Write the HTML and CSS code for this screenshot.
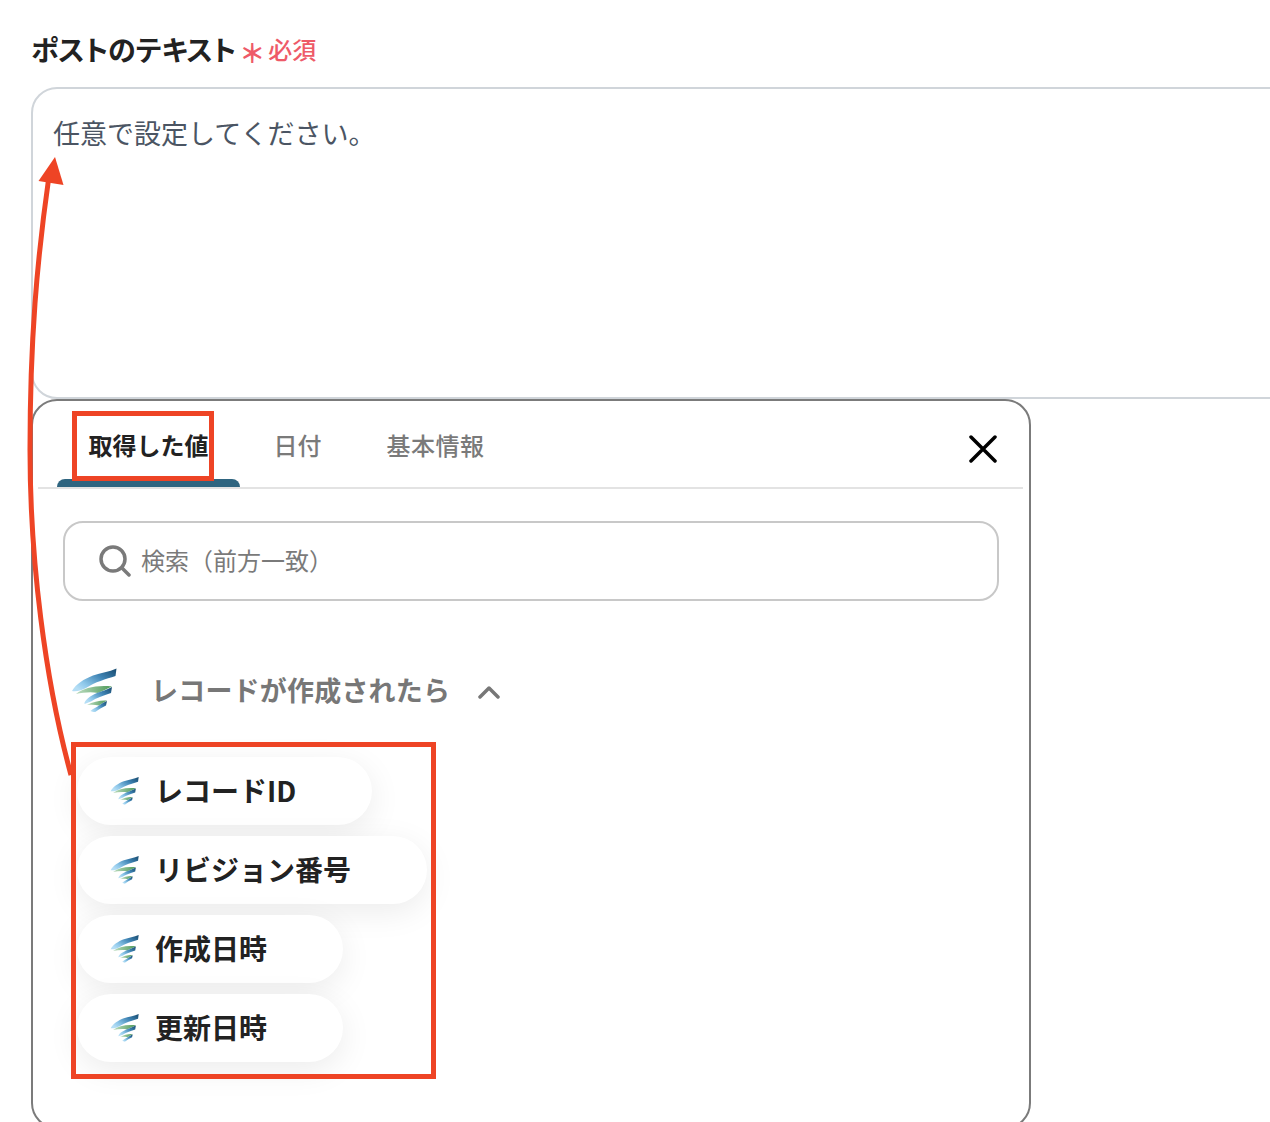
FILE: index.html
```html
<!DOCTYPE html>
<html lang="ja">
<head>
<meta charset="utf-8">
<title>ポストのテキスト</title>
<link rel="stylesheet" href="styles.css">
</head>
<body>
<svg class="defs" width="0" height="0" aria-hidden="true">
  <defs>
    <linearGradient id="gBlue" x1="1" y1="0" x2="0" y2="0.7">
      <stop offset="0" stop-color="#174a6e"/><stop offset=".4" stop-color="#3f84b4"/><stop offset=".8" stop-color="#8fc8ea"/><stop offset="1" stop-color="#b5def5"/>
    </linearGradient>
    <linearGradient id="gGreen" x1="0" y1="0" x2="1" y2="0">
      <stop offset="0" stop-color="#bcdcc0"/><stop offset="1" stop-color="#4f9a5a"/>
    </linearGradient>
    <symbol id="logo" viewBox="0 0 46 44">
      <path fill="url(#gBlue)" d="M45.500 .5 44.500 8C35 11 24 14 15 20 11 22 6 24 1 23 5 16 13 11 22 7.500 30 4.500 38 4 45.500 .5Z"/>
      <path fill="url(#gGreen)" d="M5 26C13 20 25 17 41 18.500 36 21 31 23 27 25 20 23.500 12 24.500 5 26Z"/>
      <path fill="url(#gBlue)" d="M41 19 40 25C32 28 25 30 20 33.500L13.500 36C13 32 20 27.500 26 25 32 23 36 21.500 41 19Z"/>
      <path fill="url(#gGreen)" d="M16 37C22 33.500 30 32 36 32.500 33 34 30.500 36 28 37.500 24 36.500 20 36.500 16 37Z"/>
      <path fill="url(#gBlue)" d="M36 33 35 37.500C31 39.500 27 42 23.500 44.500L19.500 43C22 40.500 26 39 28 37.500 30.500 36 33 34 36 33Z"/>
    </symbol>
  </defs>
</svg>
<main class="page">
  <div class="field-label">
    <span class="field-name">ポストのテキスト</span>
    <span class="field-required"><span class="req-mark">＊</span>必須</span>
  </div>
  <div class="textarea">任意で設定してください。</div>
  <section class="panel">
    <div class="tabs">
      <div class="tab tab-active">取得した値<span class="tab-bar"></span></div>
      <div class="tab">日付</div>
      <div class="tab tab-wide">基本情報</div>
      <svg class="close" viewBox="0 0 28 28" aria-label="閉じる">
        <path d="M2 2 26 26M26 2 2 26"/>
      </svg>
    </div>
    <div class="search">
      <svg class="search-icon" viewBox="0 0 32 32" aria-hidden="true">
        <circle cx="14" cy="14" r="12"/>
        <path d="M23 23 30 30"/>
      </svg>
      <span>検索（前方一致）</span>
    </div>
    <div class="group-head">
      <svg class="group-logo" aria-hidden="true"><use href="#logo"/></svg>
      <span class="group-title">レコードが作成されたら</span>
      <svg class="chevron" viewBox="0 0 22 14" aria-hidden="true"><path d="M2 12 11 3 20 12"/></svg>
    </div>
    <ul class="pills">
      <li class="pill"><svg class="pill-logo" aria-hidden="true"><use href="#logo"/></svg>レコードID</li>
      <li class="pill"><svg class="pill-logo" aria-hidden="true"><use href="#logo"/></svg>リビジョン番号</li>
      <li class="pill"><svg class="pill-logo" aria-hidden="true"><use href="#logo"/></svg>作成日時</li>
      <li class="pill"><svg class="pill-logo" aria-hidden="true"><use href="#logo"/></svg>更新日時</li>
    </ul>
  </section>
  <div class="mark mark-tab"></div>
  <div class="mark mark-list"></div>
  <svg class="arrow" viewBox="0 0 1270 1122" aria-hidden="true">
    <path class="arrow-line" d="M71 775C45 680 30 560 30 450 30 340 37 260 49 176"/>
    <path class="arrow-head" d="M55 157 38.500 181 63.500 185Z"/>
  </svg>
</main>
</body>
</html>
```
FILE: styles.css
```css
* { box-sizing: border-box; }
html, body { margin: 0; padding: 0; background: #fff; }
body {
  width: 1270px;
  height: 1122px;
  overflow: hidden;
  font-family: "Noto Sans CJK JP", "Noto Sans", sans-serif;
  color: #222;
}
.defs { position: absolute; }
.page { position: relative; height: 1122px; padding: 29px 0 0 31px; overflow: hidden; }

.field-label { display: flex; align-items: center; height: 40px; margin-bottom: 18px; }
.field-name { font-size: 28px; font-weight: 700; color: #222; line-height: 40px; font-feature-settings: "palt"; }
.field-required { display: flex; align-items: center; margin-left: 3px; font-size: 24px; font-weight: 500; color: #ee5a68; line-height: 40px; }
.req-mark { width: 29px; font-size: 26px; font-weight: 700; margin-top: 5px; }

.textarea {
  width: 1290px;
  height: 312px;
  padding: 24px 20px;
  border: 2px solid #d0d5da;
  border-radius: 26px;
  font-size: 27px;
  line-height: 40px;
  color: #4b5563;
}

.panel {
  width: 1000px;
  height: 730px;
  border: 2px solid #7b7b7b;
  border-radius: 26px;
  background: #fff;
}
.tabs {
  display: flex;
  gap: 2px;
  height: 88px;
  margin: 0 6px 0 5px;
  padding-left: 19px;
  border-bottom: 2px solid #e3e3e3;
  position: relative;
}
.tab {
  display: flex;
  flex-direction: column;
  align-items: center;
  padding: 27px 31.5px 0;
  font-size: 24px;
  font-weight: 500;
  line-height: 34px;
  color: #7a7a7a;
}
.tab-wide { letter-spacing: .5px; }
.tab-active { color: #222; font-weight: 700; position: relative; }
.tab-bar {
  align-self: stretch;
  height: 8px;
  margin: auto -31.5px 0;
  background: #2f6580;
  border-radius: 8px 8px 0 0;
}
.close {
  width: 28px;
  height: 28px;
  margin: 34px 26px 0 auto;
  fill: none;
  stroke: #000;
  stroke-width: 3.5;
  stroke-linecap: round;
}

.search {
  display: flex;
  align-items: center;
  gap: 10px;
  width: 936px;
  height: 80px;
  margin: 32px 0 0 30px;
  padding: 0 0 0 34px;
  border: 2px solid #c8c8c8;
  border-radius: 20px;
  font-size: 24px;
  line-height: 34px;
  color: #7a7a7a;
}
.search span { margin-top: -2px; }
.search-icon { width: 32px; height: 32px; fill: none; stroke: #7a7a7a; stroke-width: 3.5; stroke-linecap: round; }

.group-head { display: flex; align-items: center; height: 46px; margin: 67px 0 0 38px; }
.group-logo { width: 46px; height: 44px; align-self: flex-start; }
.group-title { margin: -4px 0 0 34px; font-size: 27px; font-weight: 700; letter-spacing: .2px; color: #777; white-space: nowrap; }
.chevron { width: 22px; height: 14px; margin: 2px 0 0 28px; fill: none; stroke: #777; stroke-width: 3.5; stroke-linecap: round; stroke-linejoin: round; }

.pills { display: flex; flex-direction: column; align-items: flex-start; gap: 11px; list-style: none; margin: 43px 0 0 44px; padding: 0; }
.pill {
  display: flex;
  align-items: center;
  gap: 16px;
  height: 68px;
  padding: 0 76px 2px 33px;
  border-radius: 34px;
  background: #fff;
  box-shadow: 0 8px 32px rgba(0, 0, 0, .08);
  font-size: 28px;
  font-weight: 700;
  color: #222;
  white-space: nowrap;
}
.pill-logo { width: 29px; height: 29px; flex: none; }

.mark { position: absolute; border: 5px solid #ee4425; pointer-events: none; }
.mark-tab { left: 72px; top: 411px; width: 142px; height: 70px; }
.mark-list { left: 71px; top: 742px; width: 365px; height: 337px; }
.arrow { position: absolute; left: 0; top: 0; width: 1270px; height: 1122px; pointer-events: none; }
.arrow-line { fill: none; stroke: #ee4425; stroke-width: 5; }
.arrow-head { fill: #ee4425; }
```
